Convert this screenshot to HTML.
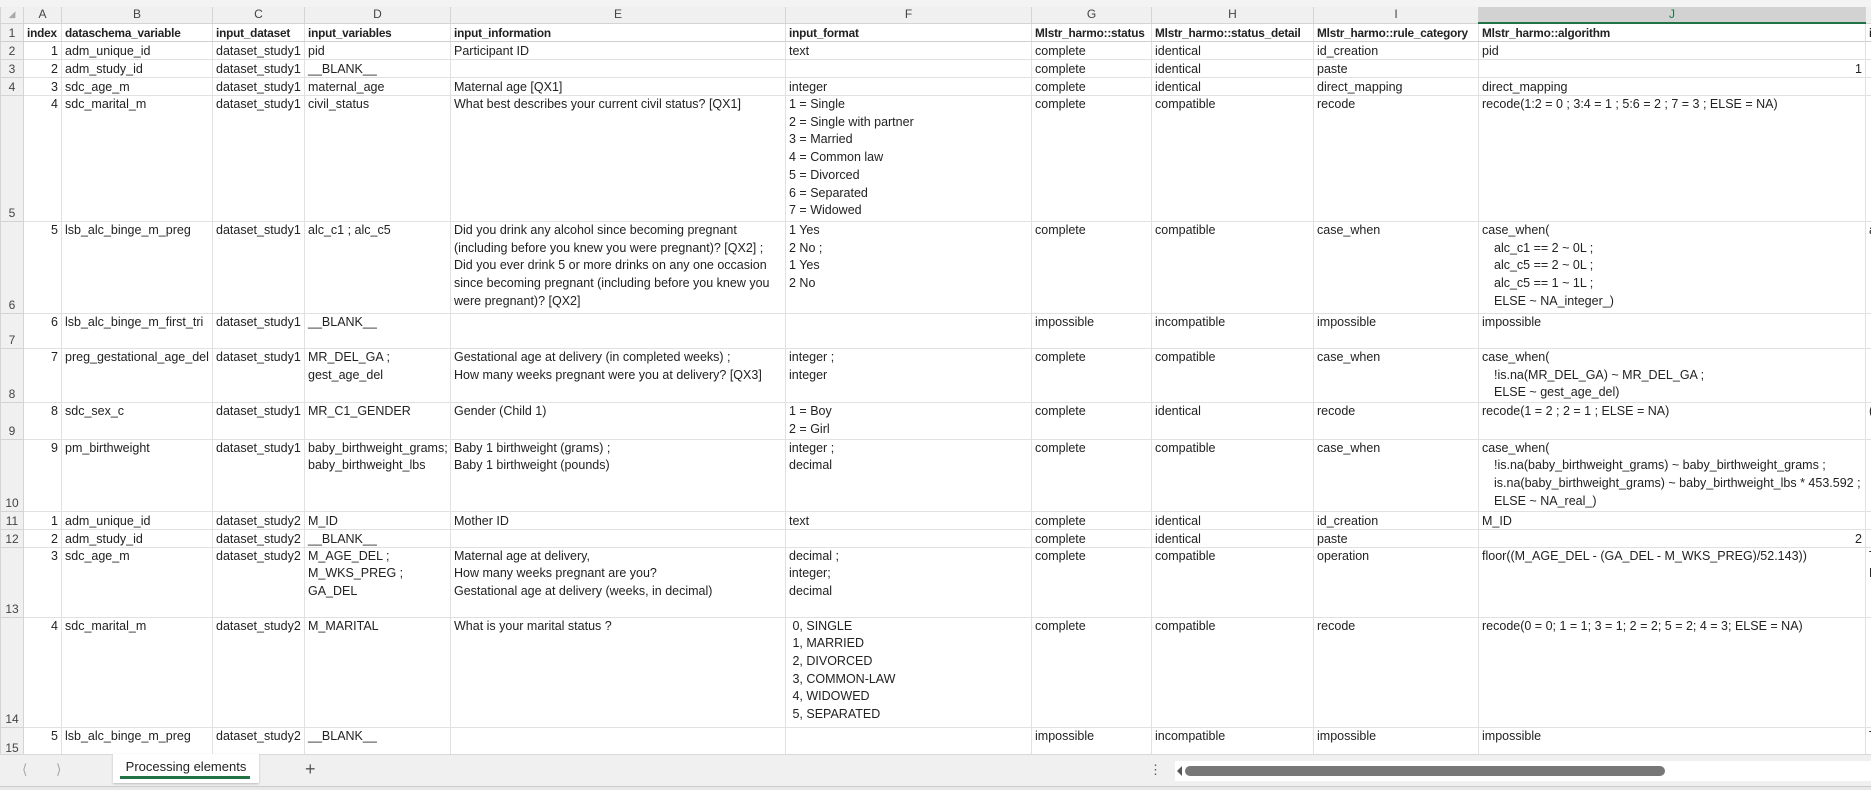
<!DOCTYPE html>
<html><head><meta charset="utf-8"><style>
*{margin:0;padding:0;box-sizing:border-box}
body{width:1871px;height:790px;overflow:hidden;background:#fff;font-family:"Liberation Sans",sans-serif;font-size:12.5px;color:#222;position:relative}
.top{position:absolute;left:0;top:0;width:1871px;height:7px;background:#f3f3f3}
table{position:absolute;left:0;top:7px;border-collapse:collapse;table-layout:fixed;width:1871px}
td{border:1px solid #e1e1e1;vertical-align:top;line-height:17.7px;padding:0 3px;white-space:pre;overflow:hidden}
tr.s td{line-height:16px;padding-top:1px}
tr.h td{background:#f0f0f0;color:#444;text-align:center;height:16px;line-height:15px;border-color:#d4d4d4;border-top:none;font-size:12px;padding-top:0}
tr.h td.sel{background:#d2d2d2;border-bottom:2px solid #217346;color:#217346}
td.rn{background:#f0f0f0;color:#444;text-align:center;vertical-align:bottom;border-color:#d4d4d4;padding:0;font-size:12px;line-height:15px}
tr.b td{font-weight:bold;border-bottom:1px solid #cfcfcf;font-size:11.8px;letter-spacing:-0.2px}
tr.b td.rn{font-weight:normal;letter-spacing:0;font-size:12px}
td.r{text-align:right}
.i{padding-left:12px}
.tabbar{position:absolute;left:0;top:754px;width:1871px;height:32px;background:#f0f0f0;border-top:1px solid #d8d8d8}
.tab{position:absolute;left:113px;top:-1px;width:146px;height:29px;background:#fff;box-shadow:0 1px 2px #bbb;text-align:center;font-size:13px;color:#222;line-height:26px}
.tab:after{content:"";position:absolute;left:7px;right:9px;bottom:4px;height:3px;background:#217346}
.bot{position:absolute;left:0;top:786px;width:1871px;height:4px;background:#e8e8e8;border-top:1px solid #ccc}
</style></head><body>
<div class="top"></div>
<table>
<colgroup><col style="width:23px"><col style="width:38px"><col style="width:151px"><col style="width:92px"><col style="width:146px"><col style="width:335px"><col style="width:246px"><col style="width:120px"><col style="width:162px"><col style="width:165px"><col style="width:387px"><col style="width:6px"></colgroup>
<tr class="h"><td style="font-size:9px;color:#aaa">◢</td><td>A</td><td>B</td><td>C</td><td>D</td><td>E</td><td>F</td><td>G</td><td>H</td><td>I</td><td class="sel">J</td><td></td></tr>
<tr class="b s" style="height:18px"><td class="rn">1</td><td>index</td><td>dataschema_variable</td><td>input_dataset</td><td>input_variables</td><td>input_information</td><td>input_format</td><td>Mlstr_harmo::status</td><td>Mlstr_harmo::status_detail</td><td>Mlstr_harmo::rule_category</td><td>Mlstr_harmo::algorithm</td><td>i</td></tr>
<tr class="s" style="height:18px"><td class="rn">2</td><td class="r">1</td><td>adm_unique_id</td><td>dataset_study1</td><td>pid</td><td>Participant ID</td><td>text</td><td>complete</td><td>identical</td><td>id_creation</td><td>pid</td><td></td></tr>
<tr class="s" style="height:18px"><td class="rn">3</td><td class="r">2</td><td>adm_study_id</td><td>dataset_study1</td><td>__BLANK__</td><td></td><td></td><td>complete</td><td>identical</td><td>paste</td><td class="r">1</td><td></td></tr>
<tr class="s" style="height:18px"><td class="rn">4</td><td class="r">3</td><td>sdc_age_m</td><td>dataset_study1</td><td>maternal_age</td><td>Maternal age [QX1]</td><td>integer</td><td>complete</td><td>identical</td><td>direct_mapping</td><td>direct_mapping</td><td></td></tr>
<tr style="height:126px"><td class="rn">5</td><td class="r">4</td><td>sdc_marital_m</td><td>dataset_study1</td><td>civil_status</td><td>What best describes your current civil status? [QX1]</td><td>1 = Single
2 = Single with partner
3 = Married
4 = Common law
5 = Divorced
6 = Separated
7 = Widowed</td><td>complete</td><td>compatible</td><td>recode</td><td>recode(1:2 = 0 ; 3:4 = 1 ; 5:6 = 2 ; 7 = 3 ; ELSE = NA)</td><td></td></tr>
<tr style="height:92px"><td class="rn">6</td><td class="r">5</td><td>lsb_alc_binge_m_preg</td><td>dataset_study1</td><td>alc_c1 ; alc_c5</td><td>Did you drink any alcohol since becoming pregnant
(including before you knew you were pregnant)? [QX2] ;
Did you ever drink 5 or more drinks on any one occasion
since becoming pregnant (including before you knew you
were pregnant)? [QX2]</td><td>1 Yes
2 No ;
1 Yes
2 No</td><td>complete</td><td>compatible</td><td>case_when</td><td>case_when(
<span class="i">alc_c1 == 2 ~ 0L ;</span>
<span class="i">alc_c5 == 2 ~ 0L ;</span>
<span class="i">alc_c5 == 1 ~ 1L ;</span>
<span class="i">ELSE ~ NA_integer_)</span></td><td>a</td></tr>
<tr style="height:35px"><td class="rn">7</td><td class="r">6</td><td>lsb_alc_binge_m_first_tri</td><td>dataset_study1</td><td>__BLANK__</td><td></td><td></td><td>impossible</td><td>incompatible</td><td>impossible</td><td>impossible</td><td></td></tr>
<tr style="height:54px"><td class="rn">8</td><td class="r">7</td><td>preg_gestational_age_del</td><td>dataset_study1</td><td>MR_DEL_GA ;
gest_age_del</td><td>Gestational age at delivery (in completed weeks) ;
How many weeks pregnant were you at delivery? [QX3]</td><td>integer ;
integer</td><td>complete</td><td>compatible</td><td>case_when</td><td>case_when(
<span class="i">!is.na(MR_DEL_GA) ~ MR_DEL_GA ;</span>
<span class="i">ELSE ~ gest_age_del)</span></td><td></td></tr>
<tr style="height:36px"><td class="rn">9</td><td class="r">8</td><td>sdc_sex_c</td><td>dataset_study1</td><td>MR_C1_GENDER</td><td>Gender (Child 1)</td><td>1 = Boy
2 = Girl</td><td>complete</td><td>identical</td><td>recode</td><td>recode(1 = 2 ; 2 = 1 ; ELSE = NA)</td><td>(</td></tr>
<tr style="height:72px"><td class="rn">10</td><td class="r">9</td><td>pm_birthweight</td><td>dataset_study1</td><td>baby_birthweight_grams;
baby_birthweight_lbs</td><td>Baby 1 birthweight (grams) ;
Baby 1 birthweight (pounds)</td><td>integer ;
decimal</td><td>complete</td><td>compatible</td><td>case_when</td><td>case_when(
<span class="i">!is.na(baby_birthweight_grams) ~ baby_birthweight_grams ;</span>
<span class="i">is.na(baby_birthweight_grams) ~ baby_birthweight_lbs * 453.592 ;</span>
<span class="i">ELSE ~ NA_real_)</span></td><td></td></tr>
<tr class="s" style="height:18px"><td class="rn">11</td><td class="r">1</td><td>adm_unique_id</td><td>dataset_study2</td><td>M_ID</td><td>Mother ID</td><td>text</td><td>complete</td><td>identical</td><td>id_creation</td><td>M_ID</td><td></td></tr>
<tr class="s" style="height:18px"><td class="rn">12</td><td class="r">2</td><td>adm_study_id</td><td>dataset_study2</td><td>__BLANK__</td><td></td><td></td><td>complete</td><td>identical</td><td>paste</td><td class="r">2</td><td></td></tr>
<tr style="height:70px"><td class="rn">13</td><td class="r">3</td><td>sdc_age_m</td><td>dataset_study2</td><td>M_AGE_DEL ;
M_WKS_PREG ;
GA_DEL</td><td>Maternal age at delivery,
How many weeks pregnant are you?
Gestational age at delivery (weeks, in decimal)</td><td>decimal ;
integer;
decimal</td><td>complete</td><td>compatible</td><td>operation</td><td>floor((M_AGE_DEL - (GA_DEL - M_WKS_PREG)/52.143))</td><td>T
F</td></tr>
<tr style="height:110px"><td class="rn">14</td><td class="r">4</td><td>sdc_marital_m</td><td>dataset_study2</td><td>M_MARITAL</td><td>What is your marital status ?</td><td> 0, SINGLE
 1, MARRIED
 2, DIVORCED
 3, COMMON-LAW
 4, WIDOWED
 5, SEPARATED</td><td>complete</td><td>compatible</td><td>recode</td><td>recode(0 = 0; 1 = 1; 3 = 1; 2 = 2; 5 = 2; 4 = 3; ELSE = NA)</td><td></td></tr>
<tr style="height:29px"><td class="rn">15</td><td class="r">5</td><td>lsb_alc_binge_m_preg</td><td>dataset_study2</td><td>__BLANK__</td><td></td><td></td><td>impossible</td><td>incompatible</td><td>impossible</td><td>impossible</td><td>T</td></tr>
</table>
<div class="tabbar">
<div style="position:absolute;left:22px;top:6px;color:#aaa;font-size:14px">&#x27E8;</div>
<div style="position:absolute;left:56px;top:6px;color:#aaa;font-size:14px">&#x27E9;</div>
<div class="tab">Processing elements</div>
<div style="position:absolute;left:305px;top:4px;color:#555;font-size:18px">+</div>
<div style="position:absolute;left:1149px;top:7px;color:#555;font-size:13px">⋮</div>
<div style="position:absolute;left:1175px;top:6px;width:696px;height:20px;background:#fff"></div>
<div style="position:absolute;left:1177px;top:11px;width:0;height:0;border-top:5px solid transparent;border-bottom:5px solid transparent;border-right:5px solid #555"></div>
<div style="position:absolute;left:1185px;top:11px;width:480px;height:10px;background:#777;border-radius:5px"></div>
</div>
<div class="bot"></div>
</body></html>
